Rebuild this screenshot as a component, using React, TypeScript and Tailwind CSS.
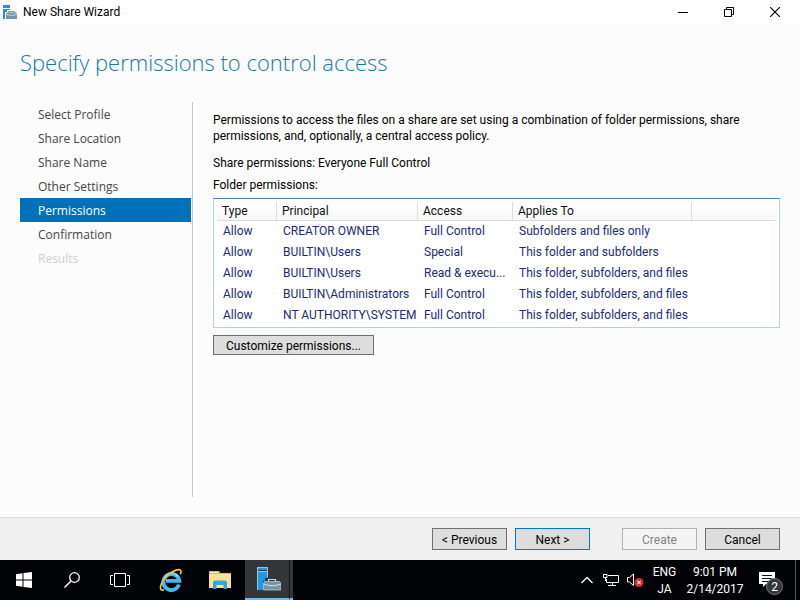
import React from "react";

const steps = [
  { label: "Select Profile", state: "normal" },
  { label: "Share Location", state: "normal" },
  { label: "Share Name", state: "normal" },
  { label: "Other Settings", state: "normal" },
  { label: "Permissions", state: "current" },
  { label: "Confirmation", state: "normal" },
  { label: "Results", state: "disabled" },
];

const stepStyles: Record<string, string> = {
  normal: "text-[#444444]",
  current: "bg-[#0072bc] text-white",
  disabled: "text-[#cfcfcf]",
};

const permissions = [
  ["Allow", "CREATOR OWNER", "Full Control", "Subfolders and files only"],
  ["Allow", "BUILTIN\\Users", "Special", "This folder and subfolders"],
  ["Allow", "BUILTIN\\Users", "Read & execu...", "This folder, subfolders, and files"],
  ["Allow", "BUILTIN\\Administrators", "Full Control", "This folder, subfolders, and files"],
  ["Allow", "NT AUTHORITY\\SYSTEM", "Full Control", "This folder, subfolders, and files"],
];

function TitleBar() {
  return (
    <header className="flex h-[23px] shrink-0 items-center bg-white pr-0.5 pl-[3px] text-black">
      <svg viewBox="0 0 14 14" className="h-3.5 w-3.5" aria-hidden="true">
        <path d="M0 0h7v3H0zM0 4h7v1H4v2H2v7H0z" fill="#1e90dd" />
        <path d="M5.500 8V6.500h6V8" fill="none" stroke="#7894a8" />
        <path d="M4 7.500h9l1 1V14H3V8.500z" fill="#7894a8" />
        <path d="M3 9.500q5.500 2 11 0" fill="none" stroke="#d9e4ec" strokeWidth="0.8" />
      </svg>
      <span className="ml-1.5 grow text-xs">New Share Wizard</span>
      <button aria-label="Minimize" className="flex h-5 w-[46px] items-center justify-center">
        <svg viewBox="0 0 10 10" className="h-2.5 w-2.5"><path d="M0 5.500h10" stroke="#000" /></svg>
      </button>
      <button aria-label="Restore" className="flex h-5 w-[46px] items-center justify-center">
        <svg viewBox="0 0 10 10" className="h-2.5 w-2.5" fill="none" stroke="#000">
          <path d="M0.500 2.500h7v7h-7zM2.500 2.500v-2h7v7h-2" />
        </svg>
      </button>
      <button aria-label="Close" className="flex h-5 w-[46px] items-center justify-center">
        <svg viewBox="0 0 10 10" className="h-2.5 w-2.5"><path d="M0 0l10 10M10 0L0 10" stroke="#000" strokeWidth="1.100" /></svg>
      </button>
    </header>
  );
}

function StepList() {
  return (
    <nav aria-label="Wizard steps" className="w-[173px] shrink-0 border-r border-[#c8c8c8] pr-px font-['Open_Sans','Noto_Sans',sans-serif]">
      <ol>
        {steps.map((step) => (
          <li key={step.label} className={`h-6 pl-[18px] text-xs leading-[26px] ${stepStyles[step.state]}`}>
            {step.label}
          </li>
        ))}
      </ol>
    </nav>
  );
}

function PermissionTable() {
  const head = "h-[18px] border-r border-[#dcdcdc] px-[5px] text-left font-normal";
  return (
    <div className="mt-[5px] border border-[#b5d3e7] border-t-[#4580b8] bg-white px-[3px] pt-[3px] pb-px">
      <table className="w-full table-fixed border-separate border-spacing-0 text-xs whitespace-nowrap">
        <colgroup>
          <col className="w-[60px]" />
          <col className="w-[141px]" />
          <col className="w-[95px]" />
          <col className="w-[179px]" />
          <col />
        </colgroup>
        <thead className="leading-[18px] text-[#101010]">
          <tr className="bg-linear-to-b from-white to-[#f6f7f8]">
            <th className={`${head} border-b`}>Type</th>
            <th className={`${head} border-b`}>Principal</th>
            <th className={`${head} border-b`}>Access</th>
            <th className={`${head} border-b`}>Applies To</th>
            <th className="border-b border-[#dcdcdc]"></th>
          </tr>
        </thead>
        <tbody className="leading-[21px] text-[#1b2a78]">
          {permissions.map((row, i) => (
            <tr key={i}>
              {row.map((cell, j) => (
                <td key={j} className="py-0 pr-0 pl-1.5">{cell}</td>
              ))}
              <td></td>
            </tr>
          ))}
        </tbody>
      </table>
    </div>
  );
}

function Footer() {
  const base = "h-[22px] w-[75px] border pt-0.5 text-xs";
  return (
    <footer className="flex h-[43px] shrink-0 items-center justify-end border-t border-[#dadada] bg-[#f0f0f0] pr-5 text-black">
      <button className={`${base} border-[#707070] bg-[#dddddd]`}>&lt; Previous</button>
      <button className={`${base} ml-2 border-[#0078d7] bg-[#dddddd]`}>Next &gt;</button>
      <button disabled className={`${base} ml-8 border-[#adb2b5] bg-[#f4f4f4] text-[#838383]`}>Create</button>
      <button className={`${base} ml-2 border-[#707070] bg-[#dddddd]`}>Cancel</button>
    </footer>
  );
}

function Taskbar() {
  const slot = "flex h-10 w-12 items-center justify-center";
  return (
    <div className="flex h-10 shrink-0 items-center bg-[#020306] text-white">
      <button aria-label="Start" className={slot}>
        <svg viewBox="0 0 16 16" className="h-4 w-4" fill="#fff">
          <path d="M0 2.200l6.500-.9v6.200H0zM7.500 1.100L16 0v7.500H7.500zM0 8.500h6.500v6.200L0 13.800zM7.500 8.500H16V16l-8.500-1.100z" />
        </svg>
      </button>
      <button aria-label="Search" className={slot}>
        <svg viewBox="0 0 16 16" className="h-4 w-4" fill="none" stroke="#fff" strokeWidth="1.300">
          <circle cx="10.500" cy="5.500" r="4.800" />
          <path d="M7 9L.5 15.500" strokeWidth="1.500" />
        </svg>
      </button>
      <button aria-label="Task view" className={slot}>
        <svg viewBox="0 0 20 14" className="h-3.5 w-5" fill="none" stroke="#fff">
          <path d="M4.500.5h11v13h-11zM3 2.500H.5v9H3M17 2.500h2.500v9H17" />
        </svg>
      </button>
      <button aria-label="Internet Explorer" className="flex h-10 w-[54px] items-center justify-center">
        <svg viewBox="0 0 24 24" className="h-6 w-6" fill="none">
          <path d="M20 16.500A8 8 0 1 1 20.300 12.900H7" stroke="#45b8ee" strokeWidth="3.900" />
          <path d="M5.200 10A8 8 0 0 1 19 8.500" stroke="#8ad8f8" strokeWidth="1.500" />
          <path d="M5 22C-1 23.500 1 15 8 8 14.500 2 21 0 22 3c.3 1-.2 2.200-.8 3.200" stroke="#f6c32c" strokeWidth="1.700" />
        </svg>
      </button>
      <button aria-label="File Explorer" className="mr-[3px] flex h-10 w-11 items-center justify-center">
        <svg viewBox="0 0 22 20" className="h-5 w-[22px]">
          <path d="M0 1h10l1.500 2H22v14H0z" fill="#e8b64a" />
          <path d="M1 2h8v1H1z" fill="#fff2c2" />
          <path d="M0 4h22v14H0z" fill="#fbe193" />
          <path d="M4 19v-7l1.500-1.500h11L18 12v7h-3.500v-4h-7v4z" fill="#34a5df" />
        </svg>
      </button>
      <button aria-label="Server Manager" className="flex h-10 w-11 items-center justify-center border-b-2 border-[#76b9ed] bg-[#343639]">
        <svg viewBox="0 0 24 24" className="ml-1 h-6 w-6">
          <path d="M0 0h11v3H0zM0 4h11v7H8v3H6v9H0z" fill="#2297e6" />
          <path d="M0 .5h11M0 4.500h11M.5 0v23M10.500 0v10" stroke="#83caf6" />
          <path d="M11.500 15v-2.500h7V15" fill="none" stroke="#c9d6de" strokeWidth="1.200" />
          <path d="M7.500 14.500h15L24 16.500V23H6.500v-6.500z" fill="#7895a8" stroke="#b8c8d2" strokeWidth="0.8" />
          <path d="M6.500 17q8.800 3.500 17.500 0" fill="none" stroke="#d4e0e7" />
        </svg>
      </button>
      <div className="h-10 w-1 border-b-2 border-l border-b-[#76b9ed] border-l-[#151618] bg-[#343639]" />
      <div className="grow" />
      <button aria-label="Show hidden icons" className="flex h-10 w-6 items-center justify-center">
        <svg viewBox="0 0 12 8" className="h-2 w-3" fill="none" stroke="#fff" strokeWidth="1.300"><path d="M.5 7L6 1.500 11.500 7" /></svg>
      </button>
      <button aria-label="Network" className="flex h-10 w-6 items-center justify-center">
        <svg viewBox="0 0 16 14" className="h-3.5 w-4" fill="none" stroke="#fff">
          <path d="M5 2.500h10.500v7H3.500V6M.5 1.500H4v3H.5zM2.500 5v3M9.500 10v3M5 12.500h8" />
        </svg>
      </button>
      <button aria-label="Volume muted" className="flex h-10 w-6 items-center justify-center">
        <svg viewBox="0 0 17 14" className="h-3.5 w-[17px]" fill="none">
          <path d="M.5 4.500h2L6.500 1v11.500L2.500 9h-2z" stroke="#fff" />
          <circle cx="12" cy="9.500" r="4.500" fill="#df2531" />
          <path d="M10.300 7.800l3.400 3.400M13.700 7.800l-3.400 3.400" stroke="#fff" strokeWidth="1.200" />
        </svg>
      </button>
      <button className="w-[35px] pt-0.5 text-center text-xs leading-[17px]">ENG<br />JA</button>
      <button className="w-[66px] pt-0.5 text-center text-xs leading-[17px] whitespace-nowrap">9:01 PM<br />2/14/2017</button>
      <button aria-label="2 notifications" className="relative ml-[11px] h-10 w-[26px]">
        <svg viewBox="0 0 16 15" className="mb-0.5 h-[15px] w-4">
          <path d="M0 0h16v12H7l-3 3v-3H0z" fill="#fff" />
          <path d="M3 3.500h10M3 6.500h10M3 9.500h7" stroke="#0b0d10" />
        </svg>
        <span className="absolute top-[18px] left-[7px] flex h-[17px] w-[17px] items-center justify-center rounded-full border border-[#77797c] bg-[#33363a] text-xs">2</span>
      </button>
      <div className="ml-2.5 h-10 w-[5px] border-l border-[#55575a]" />
    </div>
  );
}

export default function App() {
  return (
    <div className="flex min-h-screen flex-col bg-[#fcfcfc] font-['Roboto','Noto_Sans',sans-serif]">
      <TitleBar />
      <main className="flex grow flex-col px-5 pb-5">
        <h1 className="mt-[23px] font-['Open_Sans','Noto_Sans',sans-serif] text-[22px] leading-8 font-light text-[#157a9f]">
          Specify permissions to control access
        </h1>
        <div className="mt-6 flex grow">
          <StepList />
          <section className="min-w-0 grow pt-2.5 pl-5 text-xs leading-4 text-black">
            <p>
              Permissions to access the files on a share are set using a combination of folder permissions, share
              permissions, and, optionally, a central access policy.
            </p>
            <p className="mt-[11px]">Share permissions: Everyone Full Control</p>
            <p className="mt-1.5">Folder permissions:</p>
            <PermissionTable />
            <button className="mt-[7px] h-5 w-[161px] border border-[#707070] bg-[#dddddd] pt-0.5">Customize permissions...</button>
          </section>
        </div>
      </main>
      <Footer />
      <Taskbar />
    </div>
  );
}
